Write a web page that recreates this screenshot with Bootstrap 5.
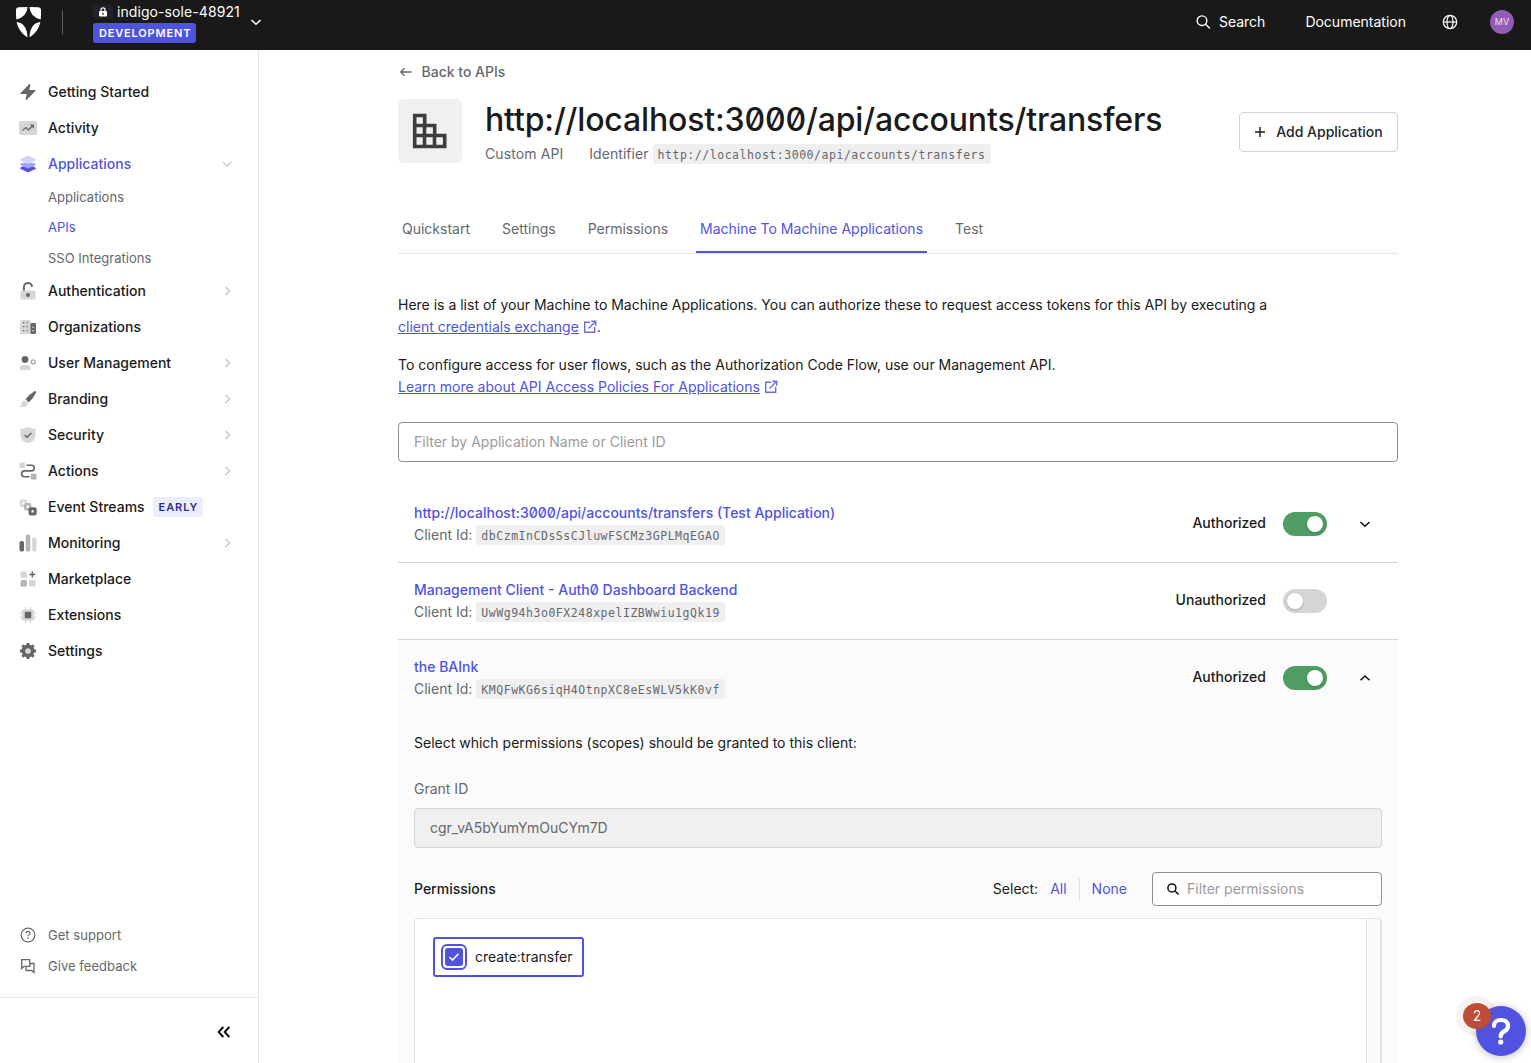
<!DOCTYPE html>
<html lang="en">
<head>
<meta charset="utf-8">
<meta name="viewport" content="width=device-width, initial-scale=1">
<title>API Details</title>
<link href="https://cdn.jsdelivr.net/npm/bootstrap@5.3.0/dist/css/bootstrap.min.css" rel="stylesheet">
<style>
  :root { --brand:#4f53e0; --ink:#1a1a1a; --muted:#65676e; --line:#e5e5e5; }
  html, body { height:100%; }
  body { font-family:Inter,"Liberation Sans",sans-serif; font-size:14px; line-height:22px; color:var(--ink); letter-spacing:0; font-feature-settings:"zero"; overflow:hidden; }
  svg { display:block; flex:none; }
  a { color:var(--brand); }
  .topbar { height:50px; background:#191919; color:#fff; padding:0 17px 0 15px; flex:none; }
  .topbar .rule { width:1px; height:24px; background:#5c5c5c; margin:0 30px 6px 20px; }
  .tenant { height:50px; padding-top:4px; }
  .tenant-name { line-height:16px; letter-spacing:.08px; }
  .lockbox { width:20px; height:14px; border-radius:3px; background:#20212b; margin-right:4px; }
  .env-tag { background:var(--brand); border-radius:3px; font-size:11px; font-weight:600; line-height:20px; height:20px; padding:0 5px 0 6px; letter-spacing:.83px; margin-top:3px; align-self:flex-start; }
  .avatar-dot { width:24px; height:24px; border-radius:50%; background:#925bb4; font-size:9px; color:#efe3f6; }
  .top-right { height:44px; }
  .side { width:259px; border-right:1px solid var(--line); flex:none; }
  .side-nav { padding-top:24px; }
  .side-item { height:36px; padding:0 26px 0 20px; font-weight:500; color:var(--ink); text-decoration:none; }
  .side-item .label-txt { margin-left:12px; }
  .side-item.on { color:var(--brand); }
  .side-sub { height:30.33px; padding-left:48px; font-size:13px; letter-spacing:.02px; color:var(--muted); text-decoration:none; display:flex; align-items:center; }
  .side-sub.on { color:var(--brand); }
  .early-tag { background:#eceefd; color:#2f3092; font-size:11px; font-weight:600; letter-spacing:.9px; line-height:20px; border-radius:3px; padding:0 5px 0 6px; margin-left:8px; }
  .side-help { height:31px; padding-left:20px; font-size:13px; letter-spacing:.04px; color:var(--muted); }
  .side-foot { height:66px; border-top:1px solid var(--line); padding-right:27px; padding-top:3px; }
  .page-col { width:1000px; margin-left:139px; padding-top:11px; }
  .back-link { color:var(--muted); font-weight:500; text-decoration:none; }
  .api-icon { width:64px; height:64px; background:#f0f0f0; border-radius:6px; }
  h1 { font-size:32px; font-weight:500; line-height:42px; letter-spacing:-.15px; margin:0; white-space:nowrap; }
  .mono-chip { font-family:"DejaVu Sans Mono","Liberation Mono",monospace; font-feature-settings:normal; font-size:11.5px; letter-spacing:.53px; line-height:20px; height:20px; background:#efefef; color:var(--muted); border-radius:3px; padding:1px 5px 0 5px; display:inline-block; }
  .txt-muted { color:var(--muted); }
  .btn-add { width:159px; height:40px; border:1px solid #d3d3d3; border-radius:4px; font-size:14px; font-weight:500; padding:0 0 1px; }
  .tabset { border-bottom:1px solid var(--line); gap:24px; height:49px; margin-top:40px; }
  .tabset a { color:var(--muted); text-decoration:none; padding:13px 4px 0; height:48px; white-space:nowrap; }
  .tabset a.on { color:var(--brand); border-bottom:2px solid var(--brand); }
  .copy p { margin:0 0 16px; }
  .inl { display:inline-block; vertical-align:-2px; margin-left:4px; }
  .form-control { font-size:14px; color:var(--muted); border:1px solid #8f8f8f; border-radius:4px; height:40px; padding:0 15px 1px; }
  .form-control::placeholder { color:#9b9b9b; opacity:1; }
  .form-control.locked { background:#f0f0f0; border-color:#d5d5d5; }
  .app-row { padding:16px; height:77px; border-bottom:1px solid #d4d4d4; }
  .app-row.last-row { border-color:transparent; }
  .app-row a { font-weight:500; text-decoration:none; }
  .state { font-weight:500; line-height:22px; margin-bottom:2px; }
  .toggle { width:44px; height:24px; border-radius:12px; background:#d5d5d5; padding:4px; margin-left:17px; display:flex; }
  .toggle.yes { background:#509d64; justify-content:flex-end; }
  .toggle i { width:16px; height:16px; background:#fff; border-radius:50%; box-shadow:0 1px 3px rgba(0,0,0,.2); }
  .chev-slot { width:12px; margin:0 11px 0 32px; }
  .open-panel { background:#fbfbfb; height:425px; }
  .open-body { padding:15px 16px 0; }
  .perm-search { width:230px; height:34px; background:#fff; border:1px solid #8f8f8f; border-radius:4px; padding-left:14px; color:#9b9b9b; gap:8px; }
  .perm-box { height:200px; border:1px solid var(--line); border-right:2px solid var(--line); border-radius:4px; background:#fff; margin-top:12px; }
  .track { width:14px; border-left:1px solid var(--line); background:#fafafa; }
  .scope-chip { height:40px; width:151px; border:2px solid var(--brand); border-radius:3px; margin:18px; padding-left:6px; align-self:flex-start; }
  .scope-check { width:26px; height:26px; border:2px solid var(--brand); border-radius:6px; padding:2px; margin-right:8px; }
  .scope-check span { background:var(--brand); border-radius:3px; width:18px; height:18px; }
  .help-fab { position:fixed; left:1476px; top:1006px; width:50px; height:50px; border-radius:50%; background:var(--brand); box-shadow:0 1px 8px rgba(0,0,0,.25); }
  .help-count { position:fixed; left:1463px; top:1003px; width:28px; height:26px; border-radius:50%; background:#bd4d37; color:#fff; box-shadow:0 0 0 7px rgba(189,77,55,.07); }
</style>
</head>
<body>
<div class="d-flex flex-column vh-100">
  <header class="topbar d-flex align-items-center">
    <svg width="27" height="32" viewBox="0 0 27 32" style="margin-bottom:6px"><g fill="#fff"><path d="M1 4Q1 1.6 3.5 1.3L12.6 1Q12 10.500 1.300 13.600Q.8 9 1 4Z"/><path d="M26 4Q26 1.600 23.500 1.300L14.400 1Q15 10.500 25.700 13.600Q26.200 9 26 4Z"/><path d="M1.600 16Q11.500 17 12.500 30.600Q12.300 31.400 11.300 30.400Q3.500 25.500 1.600 16Z"/><path d="M25.400 16Q15.500 17 14.500 30.600Q14.700 31.400 15.700 30.400Q23.500 25.500 25.400 16Z"/></g></svg>
    <div class="rule"></div>
    <div class="tenant d-flex flex-column">
      <div class="tenant-name d-flex align-items-center"><span class="lockbox d-flex align-items-center justify-content-center"><svg width="8" height="10" viewBox="0 0 8 10"><rect y="4" width="8" height="5.500" rx="1" fill="#fff"/><path d="M2 4.500V2.800a2 2 0 0 1 4 0V4.500" fill="none" stroke="#fff" stroke-width="1.300"/><rect x="3.400" y="5.800" width="1.200" height="2" fill="#20212b"/></svg></span>indigo-sole-48921</div>
      <span class="env-tag">DEVELOPMENT</span>
    </div>
    <svg style="margin:0 0 6px 8px" width="16" height="10" viewBox="0 0 16 10"><path d="M3.500 3L8 7.300 12.500 3" fill="none" stroke="#fff" stroke-width="1.500"/></svg>
    <div class="top-right d-flex align-items-center ms-auto align-self-start">
      <svg width="16" height="16" viewBox="0 0 16 16" class="me-2" fill="none" stroke="#fff" stroke-width="1.400" stroke-linecap="round"><circle cx="7" cy="6.700" r="4.800"/><path d="M10.500 10.200l4 3.800"/></svg>
      <span>Search</span>
      <span style="margin-left:40px">Documentation</span>
      <svg style="margin:0 32px 0 36px" width="16" height="16" viewBox="0 0 16 16" fill="none" stroke="#fff" stroke-width="1.200"><circle cx="8" cy="8" r="6.700"/><ellipse cx="8" cy="8" rx="3" ry="6.700"/><path d="M1.300 8h13.400"/></svg>
      <span class="avatar-dot d-flex align-items-center justify-content-center">MV</span>
    </div>
  </header>
  <div class="d-flex flex-grow-1" style="min-height:0">
    <aside class="side d-flex flex-column">
      <nav class="side-nav flex-grow-1 d-flex flex-column">
        <a class="side-item d-flex align-items-center"><svg width="16" height="16" viewBox="0 0 16 16"><path d="M9.300 0L.4 9.300Q0 10 .8 10H6.700L5.600 15.400Q5.700 16.300 6.700 15.800L15.600 6.800Q16 6 15.200 6H9.300L10.300.6Q10.200-.3 9.300 0Z" fill="#666"/></svg><span class="label-txt">Getting Started</span></a>
        <a class="side-item d-flex align-items-center"><svg width="16" height="16" viewBox="0 0 16 16" overflow="visible"><rect x="-1" y="1" width="18" height="14" rx="1.500" fill="#d6d6d6"/><path d="M2.300 10.500L6 7.500l2.500 2.500L13 5.500" fill="none" stroke="#666" stroke-width="1.300"/><path d="M9.700 4.500H14v4.300Z" fill="#666"/></svg><span class="label-txt">Activity</span></a>
        <a class="side-item on d-flex align-items-center"><svg width="16" height="16" viewBox="0 0 16 16" overflow="visible"><path d="M0 12l2-1.500h12L16 12.400Q15.500 13.500 13 14L8 16.500 3 14Q.5 13.500 0 12Z" fill="#4f53e0"/><path d="M0 8l2-1h12l2 1.300Q15.500 9.500 13 10.200L8 12.500 3 10.200Q.5 9.500 0 8Z" fill="#a2a5ef"/><path d="M8-.5L15.500 3.200Q16.200 4 15.500 4.500L8 8 .5 4.500Q-.2 4 .5 3.200Z" fill="#d2d4f9"/></svg><span class="label-txt">Applications</span><svg class="ms-auto" width="10" height="10" viewBox="0 0 10 10"><path d="M1 3l4 4 4-4" fill="none" stroke="#c3c3c3" stroke-width="1.200"/></svg></a>
        <a class="side-sub">Applications</a>
        <a class="side-sub on">APIs</a>
        <a class="side-sub">SSO Integrations</a>
        <a class="side-item d-flex align-items-center"><svg width="16" height="16" viewBox="0 0 16 16" overflow="visible"><rect x=".5" y="7.500" width="15" height="9" rx="1.500" fill="#d6d6d6"/><path d="M3.900 7.500V4.500a4.100 4.100 0 0 1 8.200-.6" fill="none" stroke="#666" stroke-width="2"/><circle cx="8" cy="12" r="2" fill="#666"/></svg><span class="label-txt">Authentication</span><svg class="ms-auto" width="10" height="10" viewBox="0 0 10 10"><path d="M3.500 1l4 4-4 4" fill="none" stroke="#c3c3c3" stroke-width="1.200"/></svg></a>
        <a class="side-item d-flex align-items-center"><svg width="16" height="16" viewBox="0 0 16 16"><rect y="1" width="11" height="14" rx="1.500" fill="#d6d6d6"/><g fill="#666"><path d="M3 3h1.300v1.300H3zM6.500 3h1.300v1.300H6.500zM3 7h1.300v1.300H3zM6.500 7h1.300v1.300H6.500zM3 11h1.300v1.300H3zM6.500 11h1.300v1.300H6.500z"/><rect x="10.500" y="4" width="5.500" height="11" rx="1.300"/></g><path d="M12.500 7.500h1.400v1.400h-1.400zM12.500 11h1.400v1.400h-1.400z" fill="#d6d6d6"/></svg><span class="label-txt">Organizations</span></a>
        <a class="side-item d-flex align-items-center"><svg width="16" height="16" viewBox="0 0 16 16"><path d="M-.3 15v-2q0-2.800 3-3H7.500q3 .2 3 3v2Z" fill="#d6d6d6"/><circle cx="5" cy="4.500" r="3.400" fill="#666"/><circle cx="13.300" cy="7" r="2" fill="none" stroke="#b5b5b5" stroke-width="1.700"/></svg><span class="label-txt">User Management</span><svg class="ms-auto" width="10" height="10" viewBox="0 0 10 10"><path d="M3.500 1l4 4-4 4" fill="none" stroke="#c3c3c3" stroke-width="1.200"/></svg></a>
        <a class="side-item d-flex align-items-center"><svg width="16" height="16" viewBox="0 0 16 16"><path d="M14.500.2Q16.500-.3 16 1.700 13.500 7 8.800 11.500L5.500 8.200Q9.500 3 14.500.2Z" fill="#666"/><path d="M5 9.400l2.700 2.700Q7.500 16 3.500 16H0Q1.300 15 1.500 13 2 9.500 5 9.400Z" fill="#d6d6d6"/></svg><span class="label-txt">Branding</span><svg class="ms-auto" width="10" height="10" viewBox="0 0 10 10"><path d="M3.500 1l4 4-4 4" fill="none" stroke="#c3c3c3" stroke-width="1.200"/></svg></a>
        <a class="side-item d-flex align-items-center"><svg width="16" height="16" viewBox="0 0 16 16"><path d="M8 0l7 2.300q.5.200.5.700V9q-.5 5-7.500 7.200Q1 14 .5 9V3q0-.5.500-.7Z" fill="#d6d6d6"/><path d="M4.700 8l2.300 2.300L11.500 6" fill="none" stroke="#666" stroke-width="1.500"/></svg><span class="label-txt">Security</span><svg class="ms-auto" width="10" height="10" viewBox="0 0 10 10"><path d="M3.500 1l4 4-4 4" fill="none" stroke="#c3c3c3" stroke-width="1.200"/></svg></a>
        <a class="side-item d-flex align-items-center"><svg width="16" height="16" viewBox="0 0 16 16" overflow="visible"><rect x="-.5" y="-.5" width="5.500" height="5.500" rx="1" fill="#d6d6d6"/><rect x="10.700" y="10.700" width="5.800" height="5.800" rx="1" fill="#b5b5b5"/><path d="M7 2.200h4.500a2.800 2.800 0 0 1 0 5.700h-7a2.900 2.900 0 0 0 0 5.900H9" fill="none" stroke="#666" stroke-width="1.600" stroke-linecap="round"/></svg><span class="label-txt">Actions</span><svg class="ms-auto" width="10" height="10" viewBox="0 0 10 10"><path d="M3.500 1l4 4-4 4" fill="none" stroke="#c3c3c3" stroke-width="1.200"/></svg></a>
        <a class="side-item d-flex align-items-center"><svg width="16" height="16" viewBox="0 0 16 16" overflow="visible"><rect x="1" y="1.800" width="5" height="5" rx="1" fill="none" stroke="#d6d6d6" stroke-width="2.400"/><rect x="5.200" y="5.200" width="5" height="5" rx="1" fill="none" stroke="#b5b5b5" stroke-width="2.400"/><rect x="10" y="9.700" width="5.200" height="5.200" rx="1" fill="none" stroke="#666" stroke-width="3"/></svg><span class="label-txt">Event Streams</span><span class="early-tag">EARLY</span></a>
        <a class="side-item d-flex align-items-center"><svg width="16" height="16" viewBox="0 0 16 16" overflow="visible"><rect x="-.5" y="6" width="4.500" height="10.500" rx="1.700" fill="#666"/><rect x="5.700" y="-.5" width="4.600" height="17" rx="1.700" fill="#b5b5b5"/><rect x="12.200" y="2.500" width="4.300" height="14" rx="1.700" fill="#d6d6d6"/></svg><span class="label-txt">Monitoring</span><svg class="ms-auto" width="10" height="10" viewBox="0 0 10 10"><path d="M3.500 1l4 4-4 4" fill="none" stroke="#c3c3c3" stroke-width="1.200"/></svg></a>
        <a class="side-item d-flex align-items-center"><svg width="16" height="16" viewBox="0 0 16 16"><rect x=".5" y=".5" width="6.500" height="6.500" rx="1.500" fill="#d6d6d6"/><rect x=".5" y="9" width="6.500" height="6.500" rx="1.500" fill="#b5b5b5"/><rect x="9" y="9" width="6.500" height="6.500" rx="1.500" fill="#d6d6d6"/><path d="M12.300.5v6M9.300 3.500h6" stroke="#666" stroke-width="1.500"/></svg><span class="label-txt">Marketplace</span></a>
        <a class="side-item d-flex align-items-center"><svg width="16" height="16" viewBox="0 0 16 16"><path d="M5.500 0v16M10.500 0v16M0 5.500h16M0 10.500h16" stroke="#d6d6d6" stroke-width="1.300"/><rect x="2.200" y="2.200" width="11.600" height="11.600" rx="1.500" fill="#d6d6d6"/><rect x="4.800" y="4.800" width="6.500" height="6.500" rx=".7" fill="#666"/></svg><span class="label-txt">Extensions</span></a>
        <a class="side-item d-flex align-items-center"><svg width="16" height="16" viewBox="0 0 16 16"><circle cx="8" cy="8" r="4.500" fill="none" stroke="#666" stroke-width="3.800"/><g stroke="#666" stroke-width="3"><path d="M8 0v3M8 13v3M0 8h3M13 8h3M2.300 2.300l2 2M11.700 11.700l2 2M13.700 2.300l-2 2M4.300 11.700l-2 2"/></g><circle cx="8" cy="8" r="2.500" fill="#d6d6d6"/></svg><span class="label-txt">Settings</span></a>
      </nav>
      <div class="side-help d-flex align-items-center"><svg width="16" height="16" viewBox="0 0 16 16" fill="none" stroke="#65676e" stroke-width="1.200"><circle cx="8" cy="8" r="6.900"/><path d="M6 6.300a2 1.900 0 1 1 2.900 1.700Q8 8.400 8 9.400M8 10.600v1.300"/></svg><span style="margin-left:12px">Get support</span></div>
      <div class="side-help d-flex align-items-center" style="margin-bottom:16px"><svg width="16" height="16" viewBox="0 0 16 16" fill="none" stroke="#65676e" stroke-width="1.300"><path d="M1.700 1.700h8v6.600H4L1.700 10.500ZM10 5.500h4v9L11.700 12.500H6V8.500"/></svg><span style="margin-left:12px">Give feedback</span></div>
      <div class="side-foot d-flex align-items-center justify-content-end"><svg width="14" height="12" viewBox="0 0 14 12"><path d="M6.300 1L1.700 6l4.600 5M12.300 1L7.700 6l4.600 5" fill="none" stroke="#111" stroke-width="2"/></svg></div>
    </aside>
    <main class="flex-grow-1 overflow-hidden">
      <div class="page-col">
        <a class="back-link d-flex align-items-center"><svg width="16" height="16" viewBox="0 0 16 16" style="margin-right:7.500px"><path d="M13.500 8H3M6.500 4.300L2.800 8l3.700 3.700" fill="none" stroke="#65676e" stroke-width="1.400"/></svg>Back to APIs</a>
        <div class="d-flex" style="margin-top:16px">
          <div class="api-icon d-flex align-items-center justify-content-center"><svg width="36" height="36" viewBox="0 0 36 36" fill="none" stroke="#3d3d3d" stroke-width="3.600"><path d="M2.700 2.500h10v10h10v10h10v11h-30ZM2.500 12.500h10v21M2.500 22.500h20v11"/></svg></div>
          <div style="margin-left:23px">
            <h1>http://localhost:3000/api/accounts/transfers</h1>
            <div class="d-flex align-items-center txt-muted" style="margin-top:2px"><span style="letter-spacing:.1px">Custom API</span><span style="margin:0 4px 0 26px;letter-spacing:.05px">Identifier</span><span class="mono-chip">http://localhost:3000/api/accounts/transfers</span></div>
          </div>
          <button class="btn btn-add d-flex align-items-center justify-content-center ms-auto" style="margin-top:13px"><svg width="12" height="12" viewBox="0 0 12 12" style="margin-right:10px"><path d="M6 1v10M1 6h10" stroke="#1a1a1a" stroke-width="1.400"/></svg>Add Application</button>
        </div>
        <nav class="tabset d-flex"><a href="#">Quickstart</a><a href="#">Settings</a><a href="#">Permissions</a><a href="#" class="on">Machine To Machine Applications</a><a href="#">Test</a></nav>
        <div class="copy" style="margin-top:40px">
          <p>Here is a list of your Machine to Machine Applications. You can authorize these to request access tokens for this API by executing a<br><a href="#">client credentials exchange</a><svg class="inl" width="14" height="14" viewBox="0 0 14 14" fill="none" stroke="#6a6de6" stroke-width="1.400"><path d="M7 2.300H1.700v10h10V7M8.300 1.300h4.400v4.400M12.500 1.500L5.500 8.500"/></svg>.</p>
          <p>To configure access for user flows, such as the Authorization Code Flow, use our Management API.<br><a href="#">Learn more about API Access Policies For Applications</a><svg class="inl" width="14" height="14" viewBox="0 0 14 14" fill="none" stroke="#6a6de6" stroke-width="1.400"><path d="M7 2.300H1.700v10h10V7M8.300 1.300h4.400v4.400M12.500 1.500L5.500 8.500"/></svg></p>
        </div>
        <input class="form-control" style="margin:24px 0" placeholder="Filter by Application Name or Client ID">
        <div class="app-row d-flex">
          <div class="me-auto"><a href="#">http://localhost:3000/api/accounts/transfers (Test Application)</a><div class="d-flex align-items-center txt-muted"><span style="margin-right:4px">Client Id:</span><span class="mono-chip">dbCzmInCDsSsCJluwFSCMz3GPLMqEGAO</span></div></div>
          <div class="d-flex align-items-center"><span class="state">Authorized</span><span class="toggle yes"><i></i></span><span class="chev-slot"><svg width="12" height="12" viewBox="0 0 12 12"><path d="M1.500 4L6 8.300 10.500 4" fill="none" stroke="#111" stroke-width="1.500"/></svg></span></div>
        </div>
        <div class="app-row d-flex">
          <div class="me-auto"><a href="#">Management Client - Auth0 Dashboard Backend</a><div class="d-flex align-items-center txt-muted"><span style="margin-right:4px">Client Id:</span><span class="mono-chip">UwWg94h3o0FX248xpelIZBWwiu1gQk19</span></div></div>
          <div class="d-flex align-items-center"><span class="state">Unauthorized</span><span class="toggle"><i></i></span><span class="chev-slot"></span></div>
        </div>
        <div class="open-panel">
          <div class="app-row last-row d-flex">
            <div class="me-auto"><a href="#">the BAInk</a><div class="d-flex align-items-center txt-muted"><span style="margin-right:4px">Client Id:</span><span class="mono-chip">KMQFwKG6siqH4OtnpXC8eEsWLV5kK0vf</span></div></div>
            <div class="d-flex align-items-center"><span class="state">Authorized</span><span class="toggle yes"><i></i></span><span class="chev-slot"><svg width="12" height="12" viewBox="0 0 12 12"><path d="M1.500 8.300L6 4l4.500 4.300" fill="none" stroke="#111" stroke-width="1.500"/></svg></span></div>
          </div>
          <div class="open-body">
            <div>Select which permissions (scopes) should be granted to this client:</div>
            <div class="txt-muted" style="margin:24px 0 8px">Grant ID</div>
            <input class="form-control locked" value="cgr_vA5bYumYmOuCYm7D" readonly>
            <div class="d-flex align-items-center" style="margin-top:24px">
              <span class="me-auto" style="font-weight:500">Permissions</span>
              <span>Select:</span><a href="#" class="text-decoration-none" style="margin:0 12px">All</a><span style="width:1px;height:23px;background:#e0e0e0"></span><a href="#" class="text-decoration-none" style="margin:0 25px 0 12px">None</a>
              <div class="perm-search d-flex align-items-center"><svg width="12" height="12" viewBox="0 0 12 12" fill="none" stroke="#111" stroke-width="1.500"><circle cx="4.900" cy="4.900" r="4"/><path d="M7.800 7.800l3.800 3.700"/></svg>Filter permissions</div>
            </div>
            <div class="perm-box d-flex justify-content-between overflow-hidden">
              <div class="scope-chip d-flex align-items-center"><span class="scope-check"><span class="d-flex align-items-center justify-content-center"><svg width="12" height="10" viewBox="0 0 12 10"><path d="M1.500 5l3 3 6-6.300" fill="none" stroke="#fff" stroke-width="1.600"/></svg></span></span>create:transfer</div>
              <div class="track"></div>
            </div>
          </div>
        </div>
      </div>
    </main>
  </div>
</div>
<div class="help-fab d-flex align-items-center justify-content-center"><svg width="22" height="28" viewBox="0 0 22 28"><path d="M4 9Q4 3 11 3t7 6Q18 12.500 14 14.500 10.700 16.200 10.700 19.500" fill="none" stroke="#fff" stroke-width="4.200" stroke-linecap="round"/><circle cx="10.700" cy="25" r="2.600" fill="#fff"/></svg></div>
<div class="help-count d-flex align-items-center justify-content-center">2</div>
<script src="https://cdn.jsdelivr.net/npm/bootstrap@5.3.0/dist/js/bootstrap.bundle.min.js"></script>
</body>
</html>
